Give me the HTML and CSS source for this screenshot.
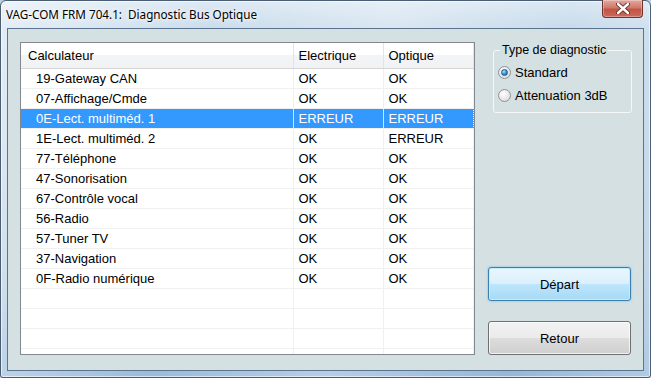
FILE: index.html
```html
<!DOCTYPE html>
<html lang="fr">
<head>
	<meta charset="UTF-8">
	<title>VAG-COM FRM 704.1: Diagnostic Bus Optique</title>
	<link rel="stylesheet" href="styles.css">
</head>
<body>
	<div class="window">
		<div class="titlebar">
			<span class="title">VAG-COM FRM 704.1:  Diagnostic Bus Optique</span>
			<div class="close">
				<svg width="14" height="11" viewBox="0 0 14 11">
					<path d="M2 1 L12 10 M12 1 L2 10" stroke="#5a2a24" stroke-width="4.2" stroke-linecap="round"/>
					<path d="M2 1 L12 10 M12 1 L2 10" stroke="#ffffff" stroke-width="2.4" stroke-linecap="round"/>
				</svg>
			</div>
		</div>

		<div class="client">
			<div class="list">
				<table>
					<thead>
						<tr>
							<th class="c1">Calculateur</th>
							<th class="c2">Electrique</th>
							<th class="c3">Optique</th>
						</tr>
					</thead>
					<tbody>
						<tr><td class="c1">19-Gateway CAN</td><td class="c2">OK</td><td class="c3">OK</td></tr>
						<tr><td class="c1">07-Affichage/Cmde</td><td class="c2">OK</td><td class="c3">OK</td></tr>
						<tr class="selected"><td class="c1">0E-Lect. multiméd. 1</td><td class="c2">ERREUR</td><td class="c3">ERREUR</td></tr>
						<tr><td class="c1">1E-Lect. multiméd. 2</td><td class="c2">OK</td><td class="c3">ERREUR</td></tr>
						<tr><td class="c1">77-Téléphone</td><td class="c2">OK</td><td class="c3">OK</td></tr>
						<tr><td class="c1">47-Sonorisation</td><td class="c2">OK</td><td class="c3">OK</td></tr>
						<tr><td class="c1">67-Contrôle vocal</td><td class="c2">OK</td><td class="c3">OK</td></tr>
						<tr><td class="c1">56-Radio</td><td class="c2">OK</td><td class="c3">OK</td></tr>
						<tr><td class="c1">57-Tuner TV</td><td class="c2">OK</td><td class="c3">OK</td></tr>
						<tr><td class="c1">37-Navigation</td><td class="c2">OK</td><td class="c3">OK</td></tr>
						<tr><td class="c1">0F-Radio numérique</td><td class="c2">OK</td><td class="c3">OK</td></tr>
						<tr><td class="c1"></td><td class="c2"></td><td class="c3"></td></tr>
						<tr><td class="c1"></td><td class="c2"></td><td class="c3"></td></tr>
						<tr><td class="c1"></td><td class="c2"></td><td class="c3"></td></tr>
						<tr><td class="c1"></td><td class="c2"></td><td class="c3"></td></tr>
					</tbody>
				</table>
			</div>

			<div class="side">
				<fieldset class="group">
					<legend>Type de diagnostic</legend>
					<label class="option"><input type="radio" name="type" class="radio" checked> Standard</label>
					<label class="option"><input type="radio" name="type" class="radio"> Attenuation 3dB</label>
				</fieldset>

				<button class="btn default">Départ</button>
				<button class="btn">Retour</button>
			</div>
		</div>
	</div>
</body>
</html>
```

FILE: styles.css
```css
*{
	margin: 0;
	padding: 0;
	box-sizing: border-box;
}
body{
	width: 651px;
	height: 378px;
	overflow: hidden;
	font-family: "Liberation Sans", Arial, sans-serif;
	font-size: 13px;
	background: #b9cfe2;
}
/*fenêtre Aero*/
.window{
	width: 651px;
	height: 378px;
	border: 1px solid #4a5d72;
	border-radius: 6px 6px 3px 3px;
	padding: 0 6px 6px 6px;
	display: flex;
	flex-direction: column;
	background:
		linear-gradient(100deg, rgba(255,255,255,0.55) 0, rgba(255,255,255,0.1) 30%, rgba(255,255,255,0.35) 55%, rgba(255,255,255,0.05) 80%, rgba(255,255,255,0.3) 100%),
		linear-gradient(to bottom, #d8e6f2 0, #c3d7e9 30px, #aec8df 70%, #8fb3d6 100%);
	box-shadow: inset 0 0 0 1px rgba(255,255,255,0.6);
}
.titlebar{
	height: 27px;
	display: flex;
	align-items: flex-start;
	flex-shrink: 0;
}
.title{
	font-family: "Noto Sans", "Open Sans", sans-serif;
	font-size: 11.7px;
	color: #000;
	white-space: pre;
	line-height: 16px;
	margin-top: 5px;
	margin-left: -1px;
	text-shadow: 0 0 6px #ffffff, 0 0 3px #ffffff;
}
/*bouton fermer*/
.close{
	margin-left: auto;
	margin-top: -1px;
	margin-right: 1px;
	width: 41px;
	height: 18px;
	border: 1px solid #6e3430;
	border-top: none;
	border-radius: 0 0 4px 4px;
	background: linear-gradient(to bottom, #e2a89e 0, #d0796b 45%, #c25445 55%, #cb6b5c 100%);
	box-shadow: inset 0 0 0 1px rgba(255,255,255,0.3);
	display: flex;
	align-items: center;
	justify-content: center;
}
.client{
	flex: 1;
	background: #d4e0e1;
	border: 1px solid #5b7590;
	display: flex;
	padding: 13px 0 0 12px;
}
/*liste*/
.list{
	width: 455px;
	height: 313px;
	border: 1px solid #828790;
	background: #ffffff;
	overflow: hidden;
	flex-shrink: 0;
}
.list table{
	border-collapse: collapse;
	table-layout: fixed;
	width: 452px;
}
.list th{
	height: 25px;
	font-weight: normal;
	text-align: left;
	background: linear-gradient(to bottom, #ffffff 0, #ffffff 50%, #f3f4f6 50%, #f1f2f4 100%);
	border-bottom: 1px solid #d5d5d5;
	border-right: 1px solid #e3e4e6;
	color: #000;
}
.list td{
	height: 20px;
	border-bottom: 1px solid #f0f0f0;
	border-right: 1px solid #f0f0f0;
	color: #000;
	white-space: nowrap;
	line-height: 15px;
}
.list .c1{
	width: 272px;
}
.list .c2{
	width: 90px;
	padding-left: 5px;
}
.list .c3{
	width: 90px;
	padding-left: 5px;
}
.list th.c1{
	padding-left: 7px;
}
.list td.c1{
	padding-left: 15px;
}
.list tr.selected td{
	background: #3399ff;
	color: #ffffff;
	border-right-color: #cfe6ff;
}
.list tr.selected td.c3{
	border-right: 1px dotted #c8803c;
}
/*colonne de droite*/
.side{
	width: 143px;
	height: 313px;
	margin-left: 13px;
	display: flex;
	flex-direction: column;
}
.group{
	margin: 1px 0 0 5px;
	width: 139px;
	border: 1px solid #f6f8f8;
	border-radius: 3px;
	padding: 4px 0 7px 4px;
	display: flex;
	flex-direction: column;
	gap: 3px;
}
.group legend{
	margin-left: 2px;
	padding: 0 2px;
	font-size: 12.5px;
	line-height: 15px;
	color: #000;
}
.option{
	display: flex;
	align-items: center;
	height: 20px;
	gap: 4px;
	color: #000;
}
/*bouton radio façon Vista*/
.radio{
	appearance: none;
	width: 13px;
	height: 13px;
	border-radius: 50%;
	border: 1px solid #8f9398;
	background: radial-gradient(circle at 40% 35%, #ffffff 0, #ececec 45%, #d2d2d2 100%);
	flex-shrink: 0;
	position: relative;
}
.radio:checked::after{
	content: "";
	position: absolute;
	left: 2px;
	top: 2px;
	width: 7px;
	height: 7px;
	border-radius: 50%;
	border: 1px solid #24588a;
	background: radial-gradient(circle at 35% 30%, #b8e6ff 0, #3a9fdd 45%, #175b93 100%);
	box-sizing: border-box;
}
/*boutons*/
.btn{
	width: 143px;
	height: 34px;
	font-family: "Liberation Sans", Arial, sans-serif;
	font-size: 13px;
	color: #000;
	border: 1px solid #707070;
	border-radius: 3px;
	background: linear-gradient(to bottom, #f2f2f2 0, #ebebeb 50%, #dddddd 50%, #cfcfcf 100%);
	box-shadow: inset 0 0 0 1px rgba(255,255,255,0.7);
}
.btn.default{
	margin-top: auto;
	margin-bottom: 20px;
	border-color: #3c7fb1;
	background: linear-gradient(to bottom, #eaf6fd 0, #d9f0fc 50%, #bee6fd 50%, #a7d9f5 100%);
	box-shadow: inset 0 0 0 1px #c6ecfc, 0 0 2px #5fb0e8;
}
```
